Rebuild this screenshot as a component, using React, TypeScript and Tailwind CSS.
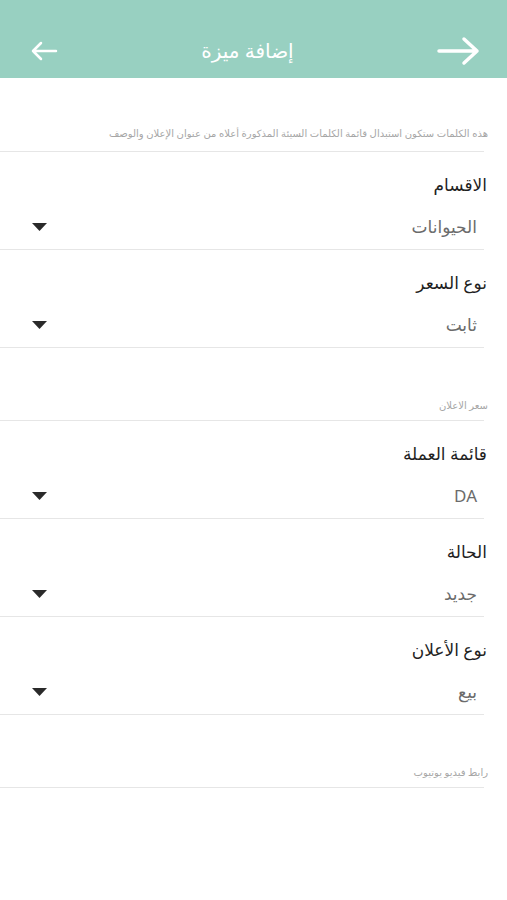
import React from "react";

const font = { fontFamily: '"Noto Sans", "DejaVu Sans", sans-serif' };

function Divider() {
  return <div className="h-px bg-[#e6e6e6] mr-[23px]" />;
}

function Triangle() {
  return (
    <svg width="15" height="8" viewBox="0 0 15 8" className="block">
      <path d="M0 0 L15 0 L7.5 8 Z" fill="#2a2a2a" />
    </svg>
  );
}

function Select({ label, value, dir = "rtl" }: { label: string; value: string; dir?: string }) {
  return (
    <div>
      <div className="pt-[21px] pb-[10px] pr-[20px] pl-[32px]">
        <div className="text-[17px] leading-[24px] text-[#1f1f1f] font-medium">{label}</div>
        <div className="mt-[18px] flex items-center justify-between pr-[10px]">
          <span className="text-[17px] leading-[24px] text-[#6b6b6b]" dir={dir}>{value}</span>
          <Triangle />
        </div>
      </div>
      <Divider />
    </div>
  );
}

function TextField({ placeholder, top, bottom }: { placeholder: string; top: string; bottom: string }) {
  return (
    <div>
      <div className={`${top} ${bottom} pr-[19px]`}>
        <div className="text-[10px] leading-[14px] text-[#a6a6a6]">{placeholder}</div>
      </div>
      <Divider />
    </div>
  );
}

export default function App() {
  return (
    <div className="w-[507px] h-[900px] bg-white overflow-hidden" style={font}>
      <div className="h-[78px] bg-[#98d0c1] flex items-center justify-between px-[30px] pt-[24px]">
        <svg width="28" height="20" viewBox="0 0 28 20" className="block">
          <path d="M26 10 H3 M11 2 L3 10 L11 18" stroke="white" strokeWidth="2.5" fill="none" strokeLinecap="round" strokeLinejoin="round" />
        </svg>
        <div className="text-white text-[20px] leading-[26px] font-medium" dir="rtl">إضافة ميزة</div>
        <svg width="44" height="30" viewBox="0 0 44 30" className="block -mr-[4px]">
          <path d="M2 15 H40 M27 3 L40 15 L27 27" stroke="white" strokeWidth="3.5" fill="none" strokeLinecap="round" strokeLinejoin="round" />
        </svg>
      </div>
      <div dir="rtl">
        <TextField top="pt-[48px]" bottom="pb-[11px]" placeholder="هذه الكلمات ستكون استبدال قائمة الكلمات السيئة المذكورة أعلاه من عنوان الإعلان والوصف" />
        <Select label="الاقسام" value="الحيوانات" />
        <Select label="نوع السعر" value="ثابت" />
        <TextField top="pt-[50px]" bottom="pb-[8px]" placeholder="سعر الاعلان" />
        <Select label="قائمة العملة" value="DA" dir="ltr" />
        <Select label="الحالة" value="جديد" />
        <Select label="نوع الأعلان" value="بيع" />
        <TextField top="pt-[50px]" bottom="pb-[8px]" placeholder="رابط فيديو يوتيوب" />
      </div>
    </div>
  );
}
